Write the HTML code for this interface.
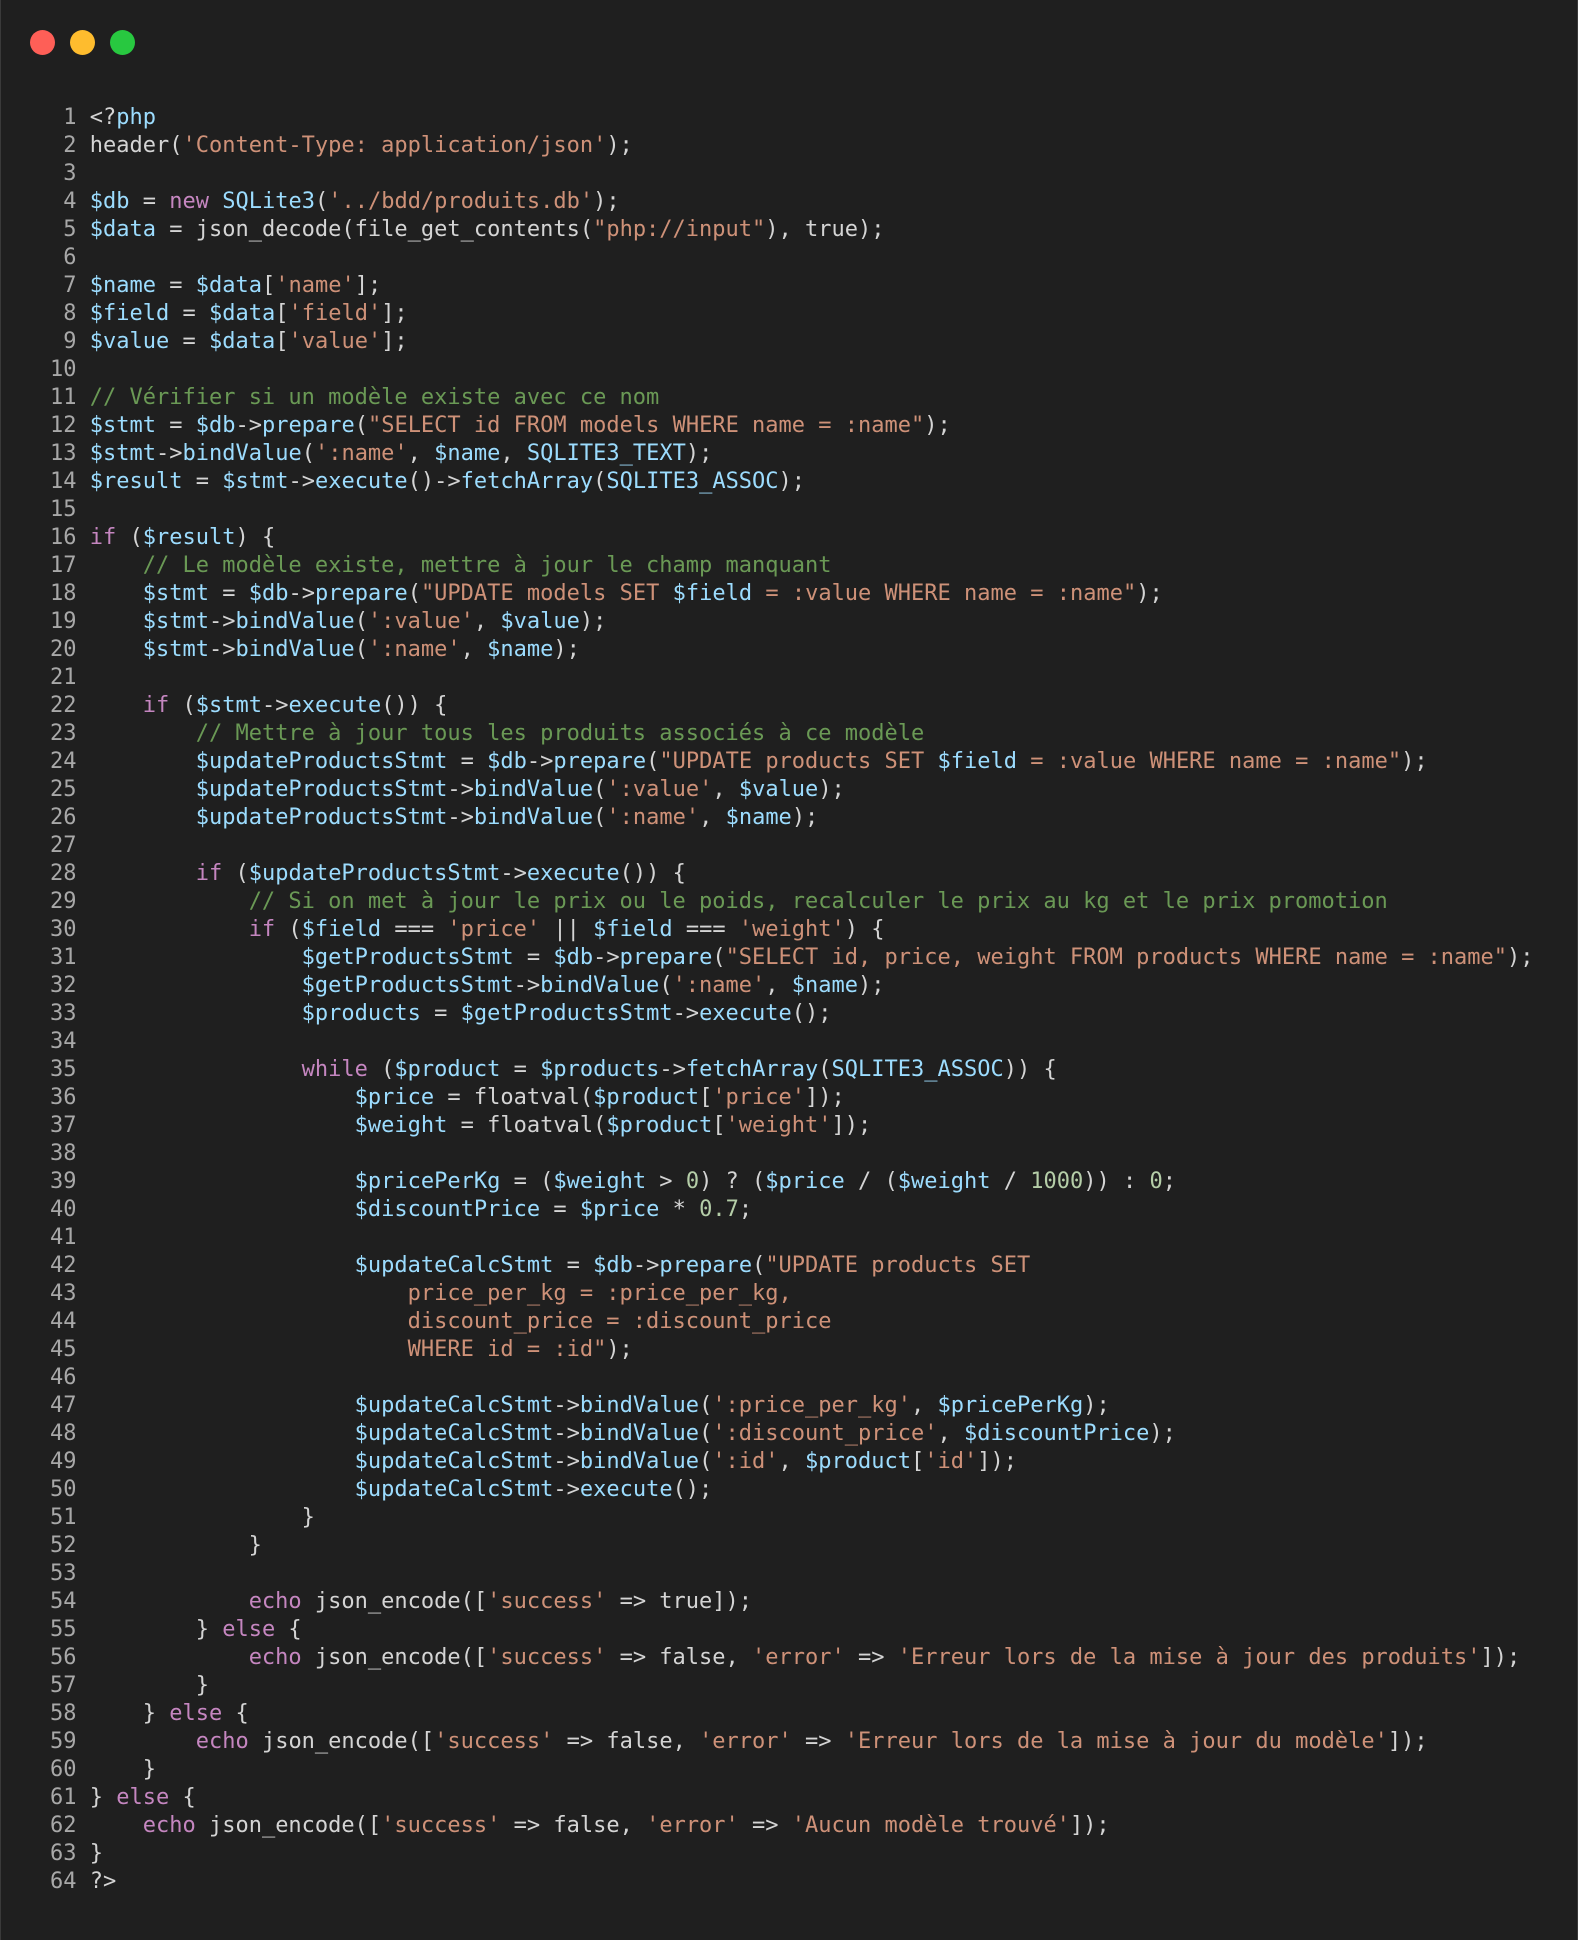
<!DOCTYPE html>
<html><head><meta charset="utf-8"><style>
html,body{margin:0;padding:0;background:#1f1f1f;}
body{width:1578px;height:1940px;position:relative;overflow:hidden;box-shadow:inset 1px 0 0 #3a3a3a,inset -1px 0 0 #3a3a3a;}
.dot{position:absolute;top:30px;width:25px;height:25px;border-radius:50%;}
pre{position:absolute;left:50px;top:104px;margin:0;font-family:"DejaVu Sans Mono","Liberation Mono",monospace;font-size:22px;line-height:28px;color:#d4d4d4;}
.ln{color:#a8a8a8;}
.v{color:#9cdcfe}.s{color:#ce9178}.k{color:#c586c0}.c{color:#6a9955}.n{color:#b5cea8}
</style></head><body>
<div class="dot" style="left:30px;background:#fe5f57"></div>
<div class="dot" style="left:70px;background:#febc2e"></div>
<div class="dot" style="left:110px;background:#28c840"></div>
<pre><span class="ln"> 1</span> &lt;?<span class="v">php</span>
<span class="ln"> 2</span> header(<span class="s">'Content-Type: application/json'</span>);
<span class="ln"> 3</span> 
<span class="ln"> 4</span> <span class="v">$db</span> = <span class="k">new</span> <span class="v">SQLite3</span>(<span class="s">'../bdd/produits.db'</span>);
<span class="ln"> 5</span> <span class="v">$data</span> = json_decode(file_get_contents(<span class="s">"php://input"</span>), true);
<span class="ln"> 6</span> 
<span class="ln"> 7</span> <span class="v">$name</span> = <span class="v">$data</span>[<span class="s">'name'</span>];
<span class="ln"> 8</span> <span class="v">$field</span> = <span class="v">$data</span>[<span class="s">'field'</span>];
<span class="ln"> 9</span> <span class="v">$value</span> = <span class="v">$data</span>[<span class="s">'value'</span>];
<span class="ln">10</span> 
<span class="ln">11</span> <span class="c">// Vérifier si un modèle existe avec ce nom</span>
<span class="ln">12</span> <span class="v">$stmt</span> = <span class="v">$db</span>-&gt;<span class="v">prepare</span>(<span class="s">"SELECT id FROM models WHERE name = :name"</span>);
<span class="ln">13</span> <span class="v">$stmt</span>-&gt;<span class="v">bindValue</span>(<span class="s">':name'</span>, <span class="v">$name</span>, <span class="v">SQLITE3_TEXT</span>);
<span class="ln">14</span> <span class="v">$result</span> = <span class="v">$stmt</span>-&gt;<span class="v">execute</span>()-&gt;<span class="v">fetchArray</span>(<span class="v">SQLITE3_ASSOC</span>);
<span class="ln">15</span> 
<span class="ln">16</span> <span class="k">if</span> (<span class="v">$result</span>) {
<span class="ln">17</span>     <span class="c">// Le modèle existe, mettre à jour le champ manquant</span>
<span class="ln">18</span>     <span class="v">$stmt</span> = <span class="v">$db</span>-&gt;<span class="v">prepare</span>(<span class="s">"UPDATE models SET </span><span class="v">$field</span><span class="s"> = :value WHERE name = :name"</span>);
<span class="ln">19</span>     <span class="v">$stmt</span>-&gt;<span class="v">bindValue</span>(<span class="s">':value'</span>, <span class="v">$value</span>);
<span class="ln">20</span>     <span class="v">$stmt</span>-&gt;<span class="v">bindValue</span>(<span class="s">':name'</span>, <span class="v">$name</span>);
<span class="ln">21</span> 
<span class="ln">22</span>     <span class="k">if</span> (<span class="v">$stmt</span>-&gt;<span class="v">execute</span>()) {
<span class="ln">23</span>         <span class="c">// Mettre à jour tous les produits associés à ce modèle</span>
<span class="ln">24</span>         <span class="v">$updateProductsStmt</span> = <span class="v">$db</span>-&gt;<span class="v">prepare</span>(<span class="s">"UPDATE products SET </span><span class="v">$field</span><span class="s"> = :value WHERE name = :name"</span>);
<span class="ln">25</span>         <span class="v">$updateProductsStmt</span>-&gt;<span class="v">bindValue</span>(<span class="s">':value'</span>, <span class="v">$value</span>);
<span class="ln">26</span>         <span class="v">$updateProductsStmt</span>-&gt;<span class="v">bindValue</span>(<span class="s">':name'</span>, <span class="v">$name</span>);
<span class="ln">27</span> 
<span class="ln">28</span>         <span class="k">if</span> (<span class="v">$updateProductsStmt</span>-&gt;<span class="v">execute</span>()) {
<span class="ln">29</span>             <span class="c">// Si on met à jour le prix ou le poids, recalculer le prix au kg et le prix promotion</span>
<span class="ln">30</span>             <span class="k">if</span> (<span class="v">$field</span> === <span class="s">'price'</span> || <span class="v">$field</span> === <span class="s">'weight'</span>) {
<span class="ln">31</span>                 <span class="v">$getProductsStmt</span> = <span class="v">$db</span>-&gt;<span class="v">prepare</span>(<span class="s">"SELECT id, price, weight FROM products WHERE name = :name"</span>);
<span class="ln">32</span>                 <span class="v">$getProductsStmt</span>-&gt;<span class="v">bindValue</span>(<span class="s">':name'</span>, <span class="v">$name</span>);
<span class="ln">33</span>                 <span class="v">$products</span> = <span class="v">$getProductsStmt</span>-&gt;<span class="v">execute</span>();
<span class="ln">34</span> 
<span class="ln">35</span>                 <span class="k">while</span> (<span class="v">$product</span> = <span class="v">$products</span>-&gt;<span class="v">fetchArray</span>(<span class="v">SQLITE3_ASSOC</span>)) {
<span class="ln">36</span>                     <span class="v">$price</span> = floatval(<span class="v">$product</span>[<span class="s">'price'</span>]);
<span class="ln">37</span>                     <span class="v">$weight</span> = floatval(<span class="v">$product</span>[<span class="s">'weight'</span>]);
<span class="ln">38</span> 
<span class="ln">39</span>                     <span class="v">$pricePerKg</span> = (<span class="v">$weight</span> &gt; <span class="n">0</span>) ? (<span class="v">$price</span> / (<span class="v">$weight</span> / <span class="n">1000</span>)) : <span class="n">0</span>;
<span class="ln">40</span>                     <span class="v">$discountPrice</span> = <span class="v">$price</span> * <span class="n">0.7</span>;
<span class="ln">41</span> 
<span class="ln">42</span>                     <span class="v">$updateCalcStmt</span> = <span class="v">$db</span>-&gt;<span class="v">prepare</span>(<span class="s">"UPDATE products SET</span>
<span class="ln">43</span> <span class="s">                        price_per_kg = :price_per_kg,</span>
<span class="ln">44</span> <span class="s">                        discount_price = :discount_price</span>
<span class="ln">45</span> <span class="s">                        WHERE id = :id"</span>);
<span class="ln">46</span> 
<span class="ln">47</span>                     <span class="v">$updateCalcStmt</span>-&gt;<span class="v">bindValue</span>(<span class="s">':price_per_kg'</span>, <span class="v">$pricePerKg</span>);
<span class="ln">48</span>                     <span class="v">$updateCalcStmt</span>-&gt;<span class="v">bindValue</span>(<span class="s">':discount_price'</span>, <span class="v">$discountPrice</span>);
<span class="ln">49</span>                     <span class="v">$updateCalcStmt</span>-&gt;<span class="v">bindValue</span>(<span class="s">':id'</span>, <span class="v">$product</span>[<span class="s">'id'</span>]);
<span class="ln">50</span>                     <span class="v">$updateCalcStmt</span>-&gt;<span class="v">execute</span>();
<span class="ln">51</span>                 }
<span class="ln">52</span>             }
<span class="ln">53</span> 
<span class="ln">54</span>             <span class="k">echo</span> json_encode([<span class="s">'success'</span> =&gt; true]);
<span class="ln">55</span>         } <span class="k">else</span> {
<span class="ln">56</span>             <span class="k">echo</span> json_encode([<span class="s">'success'</span> =&gt; false, <span class="s">'error'</span> =&gt; <span class="s">'Erreur lors de la mise à jour des produits'</span>]);
<span class="ln">57</span>         }
<span class="ln">58</span>     } <span class="k">else</span> {
<span class="ln">59</span>         <span class="k">echo</span> json_encode([<span class="s">'success'</span> =&gt; false, <span class="s">'error'</span> =&gt; <span class="s">'Erreur lors de la mise à jour du modèle'</span>]);
<span class="ln">60</span>     }
<span class="ln">61</span> } <span class="k">else</span> {
<span class="ln">62</span>     <span class="k">echo</span> json_encode([<span class="s">'success'</span> =&gt; false, <span class="s">'error'</span> =&gt; <span class="s">'Aucun modèle trouvé'</span>]);
<span class="ln">63</span> }
<span class="ln">64</span> ?&gt;</pre>
</body></html>
